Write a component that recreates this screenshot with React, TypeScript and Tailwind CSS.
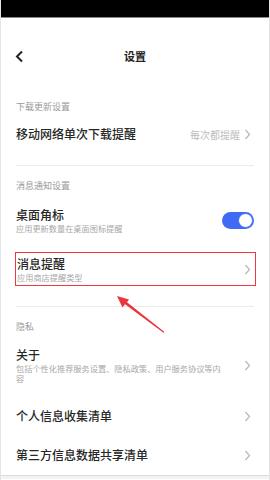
import React from "react";

function Chevron({ className = "" }: { className?: string }) {
  return (
    <svg width="7" height="11" viewBox="0 0 7 11" className={className}>
      <polyline points="1.5,1 5.5,5.5 1.5,10" fill="none" stroke="#b8b8b8" strokeWidth="1.2" />
    </svg>
  );
}

function Toggle() {
  return (
    <div className="flex h-[17px] w-[32px] items-center justify-end rounded-full bg-[#3f6bf4] pr-[1px]">
      <div className="h-[15px] w-[15px] rounded-full border border-[#3f6bf4] bg-white" />
    </div>
  );
}

export default function App() {
  return (
    <div
      className="relative h-[480px] w-[270px] overflow-hidden border-x border-[#e4e4e4] bg-white text-[#262626]"
      style={{ fontFamily: '"Noto Sans CJK SC", "Noto Sans", sans-serif' }}
    >
      {/* status bar */}
      <div className="h-[18px] border-b border-[#8a8a8a] bg-black" />

      {/* header */}
      <div className="relative flex h-[76px] items-center justify-center">
        <svg width="9" height="13" viewBox="0 0 9 13" className="absolute left-[14px] top-[32px]">
          <polyline points="7,1.5 2,6.5 7,11.5" fill="none" stroke="#222" strokeWidth="2" />
        </svg>
        <span className="text-[11px] font-bold leading-none text-[#222]">设置</span>
      </div>

      {/* download section */}
      <div className="flex h-[26px] items-center px-[15px] text-[9px] text-[#9a9a9a]">下载更新设置</div>
      <div className="flex h-[28px] items-center justify-between pl-[15px] pr-[18px]">
        <span className="text-[12px] font-medium">移动网络单次下载提醒</span>
        <div className="flex items-center gap-[4px]">
          <span className="text-[10px] text-[#bdbdbd]">每次都提醒</span>
          <Chevron />
        </div>
      </div>
      <div className="mx-[15px] mt-[17px] h-px bg-[#ececec]" />

      {/* notifications section */}
      <div className="flex h-[40px] items-center px-[15px] text-[9px] text-[#9a9a9a]">消息通知设置</div>
      <div className="flex h-[28px] items-center justify-between pl-[15px] pr-[15px]">
        <div className="flex flex-col">
          <span className="text-[12px] font-medium leading-[16px]">桌面角标</span>
          <span className="text-[8.2px] leading-[11px] text-[#a8a8a8]">应用更新数量在桌面图标提醒</span>
        </div>
        <Toggle />
      </div>

      <div className="ml-[14px] mr-[13px] mt-[18px] flex h-[34px] items-center justify-between border-[1.5px] border-[#ec3a40] pl-[1px] pr-[4px]">
        <div className="flex flex-col">
          <span className="text-[12px] font-medium leading-[16px]">消息提醒</span>
          <span className="text-[8.2px] leading-[11px] text-[#a8a8a8]">应用商店提醒类型</span>
        </div>
        <Chevron />
      </div>

      <div className="mx-[15px] mt-[20px] h-px bg-[#ececec]" />

      {/* privacy section */}
      <div className="flex h-[40px] items-center px-[15px] text-[9px] text-[#9a9a9a]">隐私</div>
      <div className="flex items-center justify-between pl-[15px] pr-[18px]">
        <div className="flex flex-col">
          <span className="text-[12px] font-medium leading-[16px]">关于</span>
          <span className="w-[212px] text-[8.2px] leading-[10px] text-[#a8a8a8]">
            包括个性化推荐服务设置、隐私政策、用户服务协议等内容
          </span>
        </div>
        <Chevron />
      </div>
      <div className="mt-[14px] flex h-[38px] items-center justify-between pl-[15px] pr-[18px]">
        <span className="text-[12px] font-medium">个人信息收集清单</span>
        <Chevron />
      </div>
      <div className="flex h-[40px] items-center justify-between pl-[15px] pr-[18px]">
        <span className="text-[12px] font-medium">第三方信息数据共享清单</span>
        <Chevron />
      </div>
      <div className="h-[4px] border-t border-[#dcdcdc] bg-[#f3f3f3]" />

      {/* red annotation arrow */}
      <svg width="270" height="480" className="pointer-events-none absolute left-0 top-0">
        <polygon
          points="116,296 128,299.5 126,302.2 163.5,332 162.5,332.8 124,304.2 121.5,307.5"
          fill="#e8363a"
        />
      </svg>
    </div>
  );
}
